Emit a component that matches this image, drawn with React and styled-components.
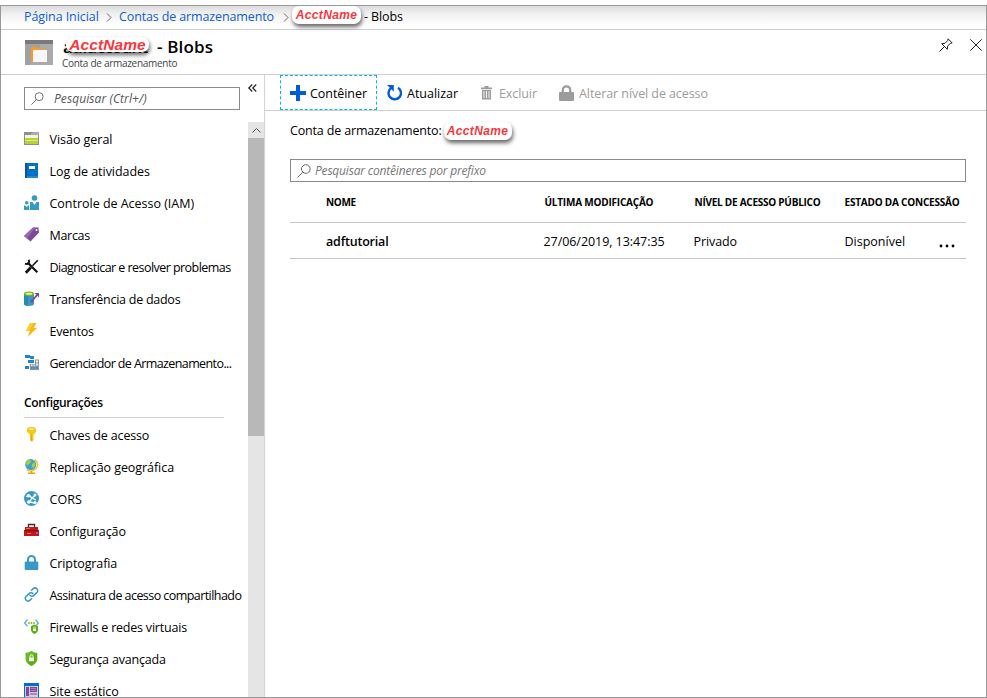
import React from "react";
import styled, { createGlobalStyle } from "styled-components";

const GlobalStyle = createGlobalStyle`
  * { box-sizing: border-box; }
  html, body { margin: 0; padding: 0; background: #fff; overflow: hidden; }
  body { font-family: "Open Sans", "Noto Sans", sans-serif; font-size: 12.5px; color: #000; }
`;

const Page = styled.div`
  width: 987px;
  height: 698px;
  padding-top: 5px;
`;
const Frame = styled.div`
  height: 693px;
  border: 1px solid #999;
  display: flex;
  flex-direction: column;
  overflow: hidden;
`;
const Text = styled.span`
  letter-spacing: ${(p) => p.$ls || 0}px;
  white-space: nowrap;
`;

const Breadcrumb = styled.nav`
  height: 24px;
  flex: none;
  display: flex;
  align-items: center;
  padding: 0 0 2px 23px;
  border-bottom: 1px solid #cfcfcf;
  background: linear-gradient(#dcdcdc, #f1f1f1 35%, #fff 85%);
`;
const Crumb = styled.a`
  color: #0f5bd4;
  letter-spacing: ${(p) => p.$ls}px;
  width: ${(p) => p.$w}px;
  white-space: nowrap;
`;
const Separator = styled.svg`
  width: 6px;
  height: 9px;
  flex: none;
  margin: 1px ${(p) => p.$right}px 0 ${(p) => p.$left}px;
  fill: none;
  stroke: #666;
`;
const Sticker = styled.span`
  display: flex;
  align-items: center;
  justify-content: center;
  flex: none;
  width: ${(p) => p.$w}px;
  height: ${(p) => p.$h}px;
  border-radius: 7px;
  background: #fff;
  box-shadow: 1px 3px 4px rgba(0, 0, 0, 0.6);
  color: #f8383c;
  font: italic 700 ${(p) => p.$size}px "Liberation Sans", Arial, sans-serif;
  letter-spacing: ${(p) => p.$ls}px;
`;
const CrumbSticker = styled(Sticker)`
  margin: 0 3px 4px 1px;
`;

const Header = styled.header`
  height: 45px;
  flex: none;
  display: flex;
  border-bottom: 1px solid #cfcfcf;
  padding-left: 24px;
`;
const HeaderIcon = styled.svg`
  width: 28px;
  height: 25px;
  margin: 10px 9px 0 0;
  flex: none;
`;
const Titles = styled.div`
  flex: 1;
`;
const Title = styled.h1`
  margin: 0;
  height: 26px;
  display: flex;
  align-items: center;
  padding-top: 7px;
  font-size: 17px;
  font-weight: 600;
  position: relative;
`;
const AccountName = styled.span`
  width: 95px;
  padding-left: 1px;
  letter-spacing: -0.75px;
`;
const TitleSticker = styled(Sticker)`
  position: absolute;
  left: 4px;
  top: 7px;
`;
const Subtitle = styled.div`
  font-size: 10px;
  line-height: 15px;
  color: #444;
  letter-spacing: -0.29px;
`;
const HeaderActions = styled.div`
  display: flex;
  gap: 17px;
  padding: 8px 4px 0 0;
`;
const ActionIcon = styled.svg`
  width: ${(p) => p.$w}px;
  height: 14px;
  fill: none;
  stroke: #222;
`;

const Body = styled.div`
  flex: 1;
  display: flex;
  min-height: 0;
`;
const Sidebar = styled.aside`
  width: 264px;
  flex: none;
  border-right: 1px solid #d4d4d4;
  display: flex;
  flex-direction: column;
`;
const SidebarTop = styled.div`
  display: flex;
  height: 47px;
  flex: none;
  padding: 12px 0 0 23px;
`;
const SearchBox = styled.div`
  width: ${(p) => p.$w}px;
  height: 23px;
  border: 1px solid #8a8a8a;
  display: flex;
  align-items: center;
  gap: ${(p) => p.$gap}px;
  padding: 0 0 0 6px;
  font-size: 12px;
  font-style: italic;
  color: ${(p) => p.$color};
`;
const SearchGlyph = styled.svg`
  width: ${(p) => p.$s}px;
  height: ${(p) => p.$s}px;
  flex: none;
  fill: none;
  stroke: #666;
`;
const Collapse = styled.svg`
  width: 9px;
  height: 8px;
  margin: -3px 0 0 8px;
  fill: none;
  stroke: #222;
  stroke-width: 1.2;
`;
const NavRegion = styled.div`
  flex: 1;
  display: flex;
  min-height: 0;
`;
const NavList = styled.div`
  flex: 1;
  overflow: hidden;
  padding: 1px 0 0 23px;
`;
const NavItem = styled.div`
  height: 32px;
  display: flex;
  align-items: center;
  gap: 10.5px;
`;
const NavIcon = styled.svg`
  width: 15px;
  height: 15px;
  flex: none;
  margin-top: -1px;
`;
const NavHeading = styled.div`
  width: 200px;
  height: 39px;
  margin-bottom: 1px;
  padding-top: 15px;
  border-bottom: 1px solid #cfcfcf;
  font-size: 12px;
  font-weight: 600;
  line-height: 18px;
`;
const Scrollbar = styled.div`
  width: 16px;
  flex: none;
  background: #e5e5e5;
`;
const ScrollUp = styled.div`
  height: 16px;
  display: flex;
  align-items: center;
  justify-content: center;
`;
const ScrollThumb = styled.div`
  height: 298px;
  background: #b8b8b8;
`;

const Main = styled.main`
  flex: 1;
  min-width: 0;
`;
const Toolbar = styled.div`
  height: 36px;
  display: flex;
  align-items: stretch;
  padding-left: 15px;
  border-bottom: 1px solid #cfcfcf;
`;
const ToolButton = styled.div`
  display: flex;
  align-items: center;
  width: ${(p) => p.$w}px;
  padding: 1px 0 0 ${(p) => p.$pad}px;
  gap: ${(p) => p.$gap}px;
  color: ${(p) => (p.$disabled ? "#9c9c9c" : "#000")};
  border: 1px ${(p) => (p.$focused ? "dashed #00b7ee" : "solid transparent")};
`;
const ToolIcon = styled.svg`
  width: ${(p) => p.$w}px;
  height: 16px;
  flex: none;
  margin-top: -1px;
`;
const Content = styled.section`
  padding: 0 20px 0 25px;
`;
const AccountLine = styled.div`
  height: 48px;
  display: flex;
  align-items: flex-start;
  padding-top: 11px;
`;
const AccountSticker = styled(Sticker)`
  margin: 0 0 0 2px;
`;
const HeadRow = styled.div`
  height: 41px;
  display: grid;
  grid-template-columns: 254.5px 150px 150px 1fr;
  line-height: 41px;
  font-size: 10px;
  font-weight: 700;
  border-bottom: 1px solid #c6c6c6;
`;
const DataRow = styled.div`
  height: 36px;
  display: grid;
  grid-template-columns: 253.5px 150px 151px 94px 1fr;
  line-height: 37px;
  border-bottom: 1px solid #c6c6c6;
`;
const NameCell = styled.span`
  padding-left: 36px;
  font-weight: ${(p) => p.$weight};
  letter-spacing: ${(p) => p.$ls}px;
`;
const More = styled.svg`
  width: 16px;
  height: 4px;
  align-self: center;
  margin-top: 8px;
`;

const icons = {
  overview: (
    <>
      <path d="M0 1h15v13H0z" fill="#8b8f91" />
      <path d="M9 1h6v3H6z" fill="#a9adaf" />
      <path d="M1 4h13v3H1z" fill="#f3f5e4" />
      <path d="M1 7h13v6H1z" fill="#b8d432" />
      <path d="M1 9.5h13" stroke="#dbe98d" />
    </>
  ),
  log: (
    <>
      <path d="M1 0h13v15H1z" fill="#0072c6" />
      <path d="M1 0h2v15H1z" fill="#1b4f9c" />
      <path d="M5 3h6v3H5z" fill="#fff" />
      <path d="M3 14h11" stroke="#59b4d9" strokeWidth=".7" />
    </>
  ),
  iam: (
    <g fill="#3999c6">
      <circle cx="10.5" cy="3" r="2.8" />
      <path d="M6 7h2.5l2 3 2-3H15v8H6z" />
      <circle cx="2.7" cy="7.7" r="1.8" />
      <path d="M0 10.5h1.5l1.2 1.7 1.2-1.7h1.3V15H0z" />
    </g>
  ),
  tag: (
    <>
      <path d="M9 .5h5.5l.5 5-8.5 9L0 9z" fill="#804998" />
      <path d="M9 .5l2 .2L3 11.5 0 9z" fill="#9a68af" />
      <circle cx="12.5" cy="3" r="1" fill="#fff" />
    </>
  ),
  tools: (
    <g stroke="#111" fill="none">
      <path d="M3.5 3.5l9.8 9.8" strokeWidth="2.2" />
      <path d="M4.8.8C5.8 4.5 4 5.6.9 4.6" strokeWidth="2" />
      <path d="M13.8 1.2L8.5 6.8" strokeWidth="1.6" />
      <path d="M6.8 8.5l-5 5.2" strokeWidth="2.8" />
    </g>
  ),
  transfer: (
    <>
      <path d="M0 3v10c0 2.6 10 2.6 10 0V3z" fill="#3999c6" />
      <path d="M0 3v10c0 1 2 1.7 4 1.9V3z" fill="#288ab8" />
      <ellipse cx="5" cy="2.8" rx="5" ry="2.2" fill="#7fba00" />
      <ellipse cx="5" cy="2.7" rx="3.3" ry="1" fill="#e5f0bd" />
      <path d="M8 9.8l5.5-6.3" stroke="#804998" strokeWidth="1.8" />
      <path d="M10.5 2H15v4.5z" fill="#804998" />
      <circle cx="8" cy="10" r="1.6" fill="#804998" />
    </>
  ),
  bolt: (
    <>
      <path d="M6 0h6.5L9.6 5H13L3.7 14l2.1-6H2z" fill="#fcb714" />
      <path d="M6 0h3.5L5 8H2z" fill="#ffd02e" />
    </>
  ),
  explorer: (
    <>
      <path d="M1 0h5v3H1zM6 1h4v3H6zM4 5h6v3H4zM1 11h4v3H1z" fill="#2385c9" />
      <path d="M11 4.500h4V15H6V9h5z" fill="#8796a1" />
      <path d="M12 5.500h2v2h-2zM7 9.500h1.500v1.500H7zM9.500 9.500H11v1.500H9.500zM12 8.500h2v2h-2z" fill="#eef3f6" />
      <path d="M7 12h1.500v2H7zM9.500 12H11v2H9.500zM12 12h2v2h-2z" fill="#3595d2" />
    </>
  ),
  key: (
    <>
      <path d="M5 0h5l2 2v3L9.5 7.5V13L8 15l-2-2V7.5L3 5V2z" fill="#fcc816" />
      <path d="M7.5 7v7" stroke="#e7a900" />
      <path d="M5.5 2.2h4" stroke="#fff" strokeWidth="1.2" />
    </>
  ),
  globe: (
    <>
      <path d="M11 .5c4 3 3.5 10-3.5 11.3-2 .3-3.700-.3-5-1.300" fill="none" stroke="#f5c52c" strokeWidth="1.5" />
      <circle cx="6.700" cy="5.500" r="5.500" fill="#3ba0cf" />
      <path d="M3 1.500l3-.8 1.500 2L5 5 3.500 7 1.700 4zM8 5l3-2 .5 3-2 3-2-1zM9 .8l1.500 1-1 .7z" fill="#a5cf3c" />
      <path d="M7.500 12v2M4 14.300h7" stroke="#f2a000" strokeWidth="1.500" />
    </>
  ),
  cors: (
    <>
      <circle cx="7.500" cy="7.500" r="7.500" fill="#3999c6" />
      <path d="M2 5.500l3.500-1L8 7l3.500-3M8 7l-2.500 4M5.500 11l5.500 1M8 7l4 2" stroke="#fff" strokeWidth="1.300" fill="none" />
      <g fill="#fff">
        <circle cx="4.500" cy="4.800" r="1.700" /><circle cx="11" cy="4" r="1.500" />
        <circle cx="4.800" cy="11" r="1.800" /><circle cx="11" cy="11.500" r="1.600" />
      </g>
    </>
  ),
  toolbox: (
    <>
      <path d="M4.500 4V1.500h6V4" fill="none" stroke="#333" strokeWidth="1.400" />
      <path d="M1 4h13v9H1z" fill="#c4161c" />
      <path d="M0 7.500h15V13H0z" fill="#c4161c" />
      <path d="M0 7.200h15v1H0z" fill="#781014" />
      <path d="M2 5.500h4M3 10.500h4" stroke="#f26b21" />
      <path d="M12 9h2v2h-2z" fill="#a05ad0" />
    </>
  ),
  lock: (
    <>
      <path d="M4 8V4.500a3.500 3.500 0 017 0V8" fill="none" stroke="#3999c6" strokeWidth="2" />
      <rect x=".7" y="6.500" width="13.600" height="8.500" rx="1" fill="#3999c6" />
    </>
  ),
  link: (
    <g fill="none" stroke="#3999c6" strokeWidth="1.500" strokeLinecap="round">
      <path d="M6 8.200a2.800 2.800 0 004 .2l3-3a2.700 2.700 0 00-3.800-3.800L7.500 3.300" />
      <path d="M9 6.800a2.800 2.800 0 00-4-.2l-3 3a2.700 2.700 0 003.800 3.800l1.700-1.700" />
    </g>
  ),
  firewall: (
    <>
      <path d="M3.500.7L.7 4l2.800 3.300M11.500.7L14.300 4l-1.800 2" fill="none" stroke="#59a9d8" strokeWidth="1.300" />
      <g fill="#7fba00"><circle cx="5" cy="4" r=".9" /><circle cx="7.500" cy="4" r=".9" /><circle cx="10" cy="4" r=".9" /></g>
      <path d="M10.500 5.500L14 7v3.500c0 2-1.500 3.500-3.500 4.500C8.500 14 7 12.500 7 10.500V7z" fill="#59b012" />
      <path d="M9 9.500h3V12H9z" fill="#fff" />
      <path d="M9.600 9.500V8.700a.9.900 0 011.800 0v.8" fill="none" stroke="#fff" strokeWidth=".7" />
    </>
  ),
  shield: (
    <>
      <path d="M7.500 0C9.500 1.300 11 1.800 13.300 1.800V8c0 3.500-3 5.500-5.800 7-2.800-1.500-5.800-3.500-5.800-7V1.800C4 1.800 5.500 1.300 7.500 0z" fill="#59b012" />
      <path d="M7.500 0C5.500 1.300 4 1.800 1.700 1.800V8c0 2 1 3.500 2.300 4.700L11 1.400C9.800 1.200 8.800.8 7.500 0z" fill="#74c02a" opacity=".6" />
      <path d="M5 6.500h5v3.700H5z" fill="#fff" />
      <path d="M6 6.500V5.300a1.500 1.500 0 013 0v1.200" fill="none" stroke="#fff" />
    </>
  ),
  site: (
    <>
      <path d="M0 0h15v15H0z" fill="#0072c6" />
      <path d="M1 3h13v11H1z" fill="#d9c7e6" />
      <path d="M2 4h3v9H2zM6 4h7v5H6z" fill="#804998" />
      <path d="M7 5.500h5M7 7.500h5" stroke="#b795c9" strokeWidth=".7" />
      <path d="M6 11h7" stroke="#804998" />
    </>
  ),
};

const mainItems = [
  ["overview", "Visão geral", -0.03],
  ["log", "Log de atividades", -0.04],
  ["iam", "Controle de Acesso (IAM)", -0.02],
  ["tag", "Marcas", -0.3],
  ["tools", "Diagnosticar e resolver problemas", -0.55],
  ["transfer", "Transferência de dados", -0.26],
  ["bolt", "Eventos", -0.22],
  ["explorer", "Gerenciador de Armazenamento...", -0.6],
];
const settingsItems = [
  ["key", "Chaves de acesso", -0.16],
  ["globe", "Replicação geográfica", -0.06],
  ["cors", "CORS", 0.1],
  ["toolbox", "Configuração", -0.08],
  ["lock", "Criptografia", -0.1],
  ["link", "Assinatura de acesso compartilhado", -0.56],
  ["firewall", "Firewalls e redes virtuais", -0.21],
  ["shield", "Segurança avançada", -0.18],
  ["site", "Site estático", -0.08],
];

const renderItem = ([icon, label, ls]) => (
  <NavItem key={label}>
    <NavIcon viewBox="0 0 15 15">{icons[icon]}</NavIcon>
    <Text $ls={ls}>{label}</Text>
  </NavItem>
);

const Search = ({ width, placeholder, size, gap, ls, color }) => (
  <SearchBox $w={width} $gap={gap} $color={color}>
    <SearchGlyph $s={size} viewBox="0 0 14 14">
      <circle cx="8.800" cy="5" r="4.300" />
      <path d="M5.700 8.200L.5 13.500" />
    </SearchGlyph>
    <Text $ls={ls}>{placeholder}</Text>
  </SearchBox>
);

export default function App() {
  return (
    <Page>
      <GlobalStyle />
      <Frame>
        <Breadcrumb>
          <Crumb $w={75} $ls={-0.08}>Página Inicial</Crumb>
          <Separator $left={7} $right={7} viewBox="0 0 6 9"><path d="M1 .5l4 4-4 4" /></Separator>
          <Crumb $w={155} $ls={-0.13}>Contas de armazenamento</Crumb>
          <Separator $left={9} $right={2} viewBox="0 0 6 9"><path d="M1 .5l4 4-4 4" /></Separator>
          <CrumbSticker $w={69} $h={18} $size={12} $ls={0.33}>AcctName</CrumbSticker>
          <Text $ls={-0.1}>- Blobs</Text>
        </Breadcrumb>

        <Header>
          <HeaderIcon viewBox="0 0 28 25">
            <path d="M0 0h28v25H0z" fill="#a0a1a2" />
            <path d="M0 0h28v4H0z" fill="#7a7a7a" />
            <path d="M16 4h12v21H5z" fill="#b0b1b2" opacity=".6" />
            <path d="M6 7h6l1 2h8v13H6z" fill="#ff9a1f" />
            <path d="M8 10h14v12H8z" fill="#f8f8f8" />
          </HeaderIcon>
          <Titles>
            <Title>
              <AccountName>adfaccount</AccountName>
              <TitleSticker $w={83} $h={15} $size={15.5} $ls={0.1}>AcctName</TitleSticker>
              <Text $ls={0.16}>- Blobs</Text>
            </Title>
            <Subtitle>Conta de armazenamento</Subtitle>
          </Titles>
          <HeaderActions>
            <ActionIcon $w={14} viewBox="0 0 14 14">
              <path d="M.5 13.500l4.500-4.500M9 .8l4.200 4.200-1.700.2-2.800 2.800-.4 3.300-5.600-5.600 3.300-.4 2.800-2.800z" />
            </ActionIcon>
            <ActionIcon $w={12} viewBox="0 0 12 14"><path d="M.3 1.300l11.400 11.400M11.700 1.300L.3 12.700" /></ActionIcon>
          </HeaderActions>
        </Header>

        <Body>
          <Sidebar>
            <SidebarTop>
              <Search width={216} placeholder="Pesquisar (Ctrl+/)" size={13} gap={10} ls={0.08} color="#555" />
              <Collapse viewBox="0 0 9 8"><path d="M4.200.5L.8 4l3.400 3.500M8.200.5L4.800 4l3.400 3.500" /></Collapse>
            </SidebarTop>
            <NavRegion>
              <NavList>
                {mainItems.map(renderItem)}
                <NavHeading><Text $ls={-0.31}>Configurações</Text></NavHeading>
                {settingsItems.map(renderItem)}
              </NavList>
              <Scrollbar>
                <ScrollUp>
                  <svg width="9" height="5" viewBox="0 0 9 5" fill="none" stroke="#555"><path d="M.5 4.500l4-4 4 4" /></svg>
                </ScrollUp>
                <ScrollThumb />
              </Scrollbar>
            </NavRegion>
          </Sidebar>

          <Main>
            <Toolbar>
              <ToolButton $w={97} $pad={9} $gap={4} $focused>
                <ToolIcon $w={16} viewBox="0 0 16 16"><path d="M6 0h4v6h6v4h-6v6H6v-6H0V6h6z" fill="#015cda" /></ToolIcon>
                <Text $ls={-0.06}>Contêiner</Text>
              </ToolButton>
              <ToolButton $w={93} $pad={9} $gap={5}>
                <ToolIcon $w={15} viewBox="0 0 15 16">
                  <path d="M4.500 2.800A6.200 6.200 0 1 0 11 2.800" fill="none" stroke="#015cda" strokeWidth="2.400" />
                  <path d="M0 0h6.800v6.800L4.600 4.500z" fill="#015cda" />
                </ToolIcon>
                <Text $ls={-0.02}>Atualizar</Text>
              </ToolButton>
              <ToolButton $w={79} $pad={10} $gap={7} $disabled>
                <ToolIcon $w={11} viewBox="0 0 11 16">
                  <path d="M0 2.500h11v1.700H0zM3.500 1h4v1.500h-4zM1 5h9v9.500H1z" fill="#9c9c9c" />
                  <path d="M3 6v7M5.500 6v7M8 6v7" stroke="#fff" strokeWidth=".9" />
                </ToolIcon>
                <Text $ls={-0.09}>Excluir</Text>
              </ToolButton>
              <ToolButton $w={160} $pad={9} $gap={5} $disabled>
                <ToolIcon $w={15} viewBox="0 0 15 16">
                  <path d="M3.800 8V5a3.700 3.700 0 017.400 0v3" fill="none" stroke="#9c9c9c" strokeWidth="2.200" />
                  <rect y="7" width="15" height="9" rx="1" fill="#9c9c9c" />
                </ToolIcon>
                <Text $ls={-0.08}>Alterar nível de acesso</Text>
              </ToolButton>
            </Toolbar>

            <Content>
              <AccountLine>
                <Text $ls={-0.16}>Conta de armazenamento:</Text>
                <AccountSticker $w={68} $h={18} $size={12} $ls={0.33}>AcctName</AccountSticker>
              </AccountLine>
              <Search width={676} placeholder="Pesquisar contêineres por prefixo" size={14} gap={4} ls={-0.19} color="#777" />
              <HeadRow>
                <NameCell $weight={700} $ls={-0.3}>NOME</NameCell>
                <Text $ls={-0.21}>ÚLTIMA MODIFICAÇÃO</Text>
                <Text $ls={-0.25}>NÍVEL DE ACESSO PÚBLICO</Text>
                <Text $ls={-0.21}>ESTADO DA CONCESSÃO</Text>
              </HeadRow>
              <DataRow>
                <NameCell $weight={600} $ls={-0.2}>adftutorial</NameCell>
                <Text $ls={-0.06}>27/06/2019, 13:47:35</Text>
                <Text $ls={-0.1}>Privado</Text>
                <Text>Disponível</Text>
                <More viewBox="0 0 16 4"><circle cx="2" cy="2" r="1.400" /><circle cx="8" cy="2" r="1.400" /><circle cx="14" cy="2" r="1.400" /></More>
              </DataRow>
            </Content>
          </Main>
        </Body>
      </Frame>
    </Page>
  );
}
